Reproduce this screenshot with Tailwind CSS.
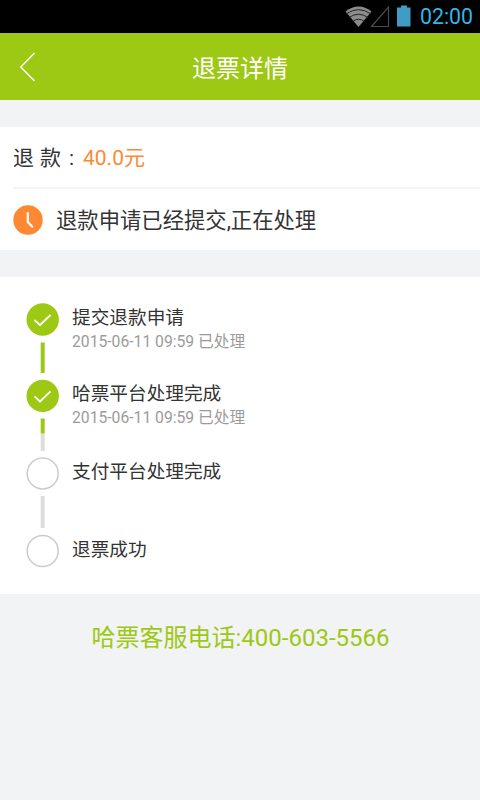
<!DOCTYPE html>
<html lang="zh-CN">
<head>
<meta charset="utf-8">
<meta name="viewport" content="width=device-width, initial-scale=1">
<title>退票详情</title>
<script src="https://cdn.jsdelivr.net/npm/@tailwindcss/browser@4"></script>
</head>
<body class="min-h-[800px] bg-[#f2f3f5] font-[Roboto,'Noto_Sans_CJK_SC',sans-serif] text-[#333]">
  <div class="flex h-[33px] items-center justify-end bg-black pr-[7px]">
    <svg class="h-[33px] w-[70px]" viewBox="342 0 70 33" fill="none">
      <path d="M345.500 11.500Q358.500 1.500 371.500 11.500L358.500 27Z" fill="#8c8c8c"/>
      <path d="M346.500 13.700Q358.500 5.500 370.500 13.700M349 17.500Q358.500 11 368 17.500M352.500 21.500Q358.500 17 364.500 21.500" stroke="#222" stroke-width="1"/>
      <path d="M388.500 7V26.500H371.500Z" stroke="#4b4b4b" stroke-width="1.200"/>
      <path d="M397 7.500H401V5.500H407V7.500H410.500V26.500H397Z" fill="#419cc4"/>
    </svg>
    <span class="ml-2 pt-px text-[21.300px] leading-[32px] text-[#33b5e5]">02:00</span>
  </div>

  <header class="grid h-[67px] grid-cols-[60px_1fr_60px] items-center bg-[#9dc814] text-white">
    <svg class="ml-[18px] h-[32px] w-[20px]" viewBox="0 0 20 32" fill="none" stroke="currentColor" stroke-width="1.400"><path d="M16.500 2L2.800 16L16.500 30"/></svg>
    <h1 class="pt-[4px] text-center text-[24px] leading-[32px]">退票详情</h1>
  </header>

  <section class="mt-[27px] h-[123px] bg-white pl-[13px]">
    <div class="flex h-[62px] items-center border-b-2 border-[#f3f3f4] pt-[4px] text-[21px]">
      <span class="whitespace-pre">退<span class="inline-block w-[6px]"> </span>款</span><span class="ml-[8px] w-[14px]">:</span><span class="text-[#ff8833]">40.0元</span>
    </div>
    <div class="flex h-[61px] items-center">
      <svg class="h-[30px] w-[30px]" viewBox="0 0 30 30" fill="none"><circle cx="15" cy="15" r="14.700" fill="#ff8833"/><path d="M14.800 8V17L19.300 21.700" stroke="#fff" stroke-width="2.200" stroke-linecap="round" stroke-linejoin="round"/></svg>
      <span class="ml-[13px] pt-[3px] text-[21.330px]">退款申请已经提交,正在处理</span>
    </div>
  </section>

  <section class="mt-[27px] h-[317px] bg-white pt-[26px] pl-[26px]">
    <div class="flex h-[76px]">
      <svg class="h-[76px] w-[33px]" viewBox="0 0 33 76" fill="none"><circle cx="16.700" cy="16.500" r="16.200" fill="#9dc814"/><path d="M8.500 17L14 22L24.500 12" stroke="#fff" stroke-width="1.800"/><path d="M16.700 39.500V70" stroke="#9dc814" stroke-width="4"/></svg>
      <div class="ml-[13px] pt-[2px]">
        <p class="text-[18.670px] leading-[27px]">提交退款申请</p>
        <p class="text-[15.700px] leading-[20px] text-[#9b9b9b]">2015-06-11 09:59 已处理</p>
      </div>
    </div>
    <div class="flex h-[77px]">
      <svg class="h-[77px] w-[33px]" viewBox="0 0 33 77" fill="none"><circle cx="16.700" cy="16.900" r="16.200" fill="#9dc814"/><path d="M8.500 17.400L14 22.400L24.500 12.400" stroke="#fff" stroke-width="1.800"/><path d="M16.700 54V72" stroke="#ddd" stroke-width="4"/><path d="M16.700 39.500V54.300" stroke="#9dc814" stroke-width="4"/></svg>
      <div class="ml-[13px] pt-[2px]">
        <p class="text-[18.670px] leading-[27px]">哈票平台处理完成</p>
        <p class="text-[15.700px] leading-[20px] text-[#9b9b9b]">2015-06-11 09:59 已处理</p>
      </div>
    </div>
    <div class="flex h-[78px]">
      <svg class="h-[78px] w-[33px]" viewBox="0 0 33 78" fill="none"><circle cx="16.700" cy="17.400" r="15.500" stroke="#ccc" stroke-width="1.500"/><path d="M16.700 40V72" stroke="#ddd" stroke-width="4"/></svg>
      <p class="ml-[13px] pt-[2px] text-[18.670px] leading-[29px]">支付平台处理完成</p>
    </div>
    <div class="flex h-[34px]">
      <svg class="h-[34px] w-[33px]" viewBox="0 0 33 34" fill="none"><circle cx="16.700" cy="17" r="15.500" stroke="#ccc" stroke-width="1.500"/></svg>
      <p class="ml-[13px] pt-[2px] text-[18.670px] leading-[28px]">退票成功</p>
    </div>
  </section>

  <p class="mt-[28px] pl-px text-center text-[24px] leading-[32px] text-[#9dc814]">哈票客服电话:400-603-5566</p>
</body>
</html>
